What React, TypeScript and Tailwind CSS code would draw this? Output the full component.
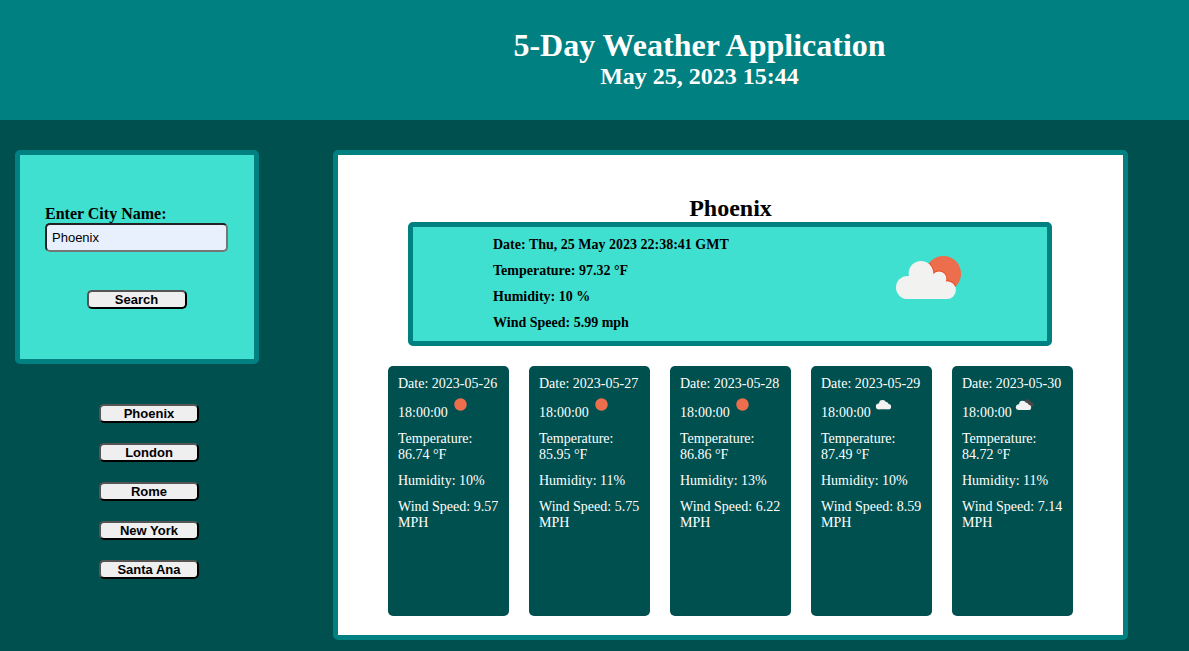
import { useId, useState } from "react";

type Sky = "clear" | "fewClouds" | "cloudy" | "overcast";

interface Forecast {
  date: string;
  sky: Sky;
  temperature: string;
  humidity: string;
  wind: string;
}

const cities = ["Phoenix", "London", "Rome", "New York", "Santa Ana"];

const forecasts: Forecast[] = [
  { date: "2023-05-26", sky: "clear", temperature: "86.74", humidity: "10", wind: "9.57" },
  { date: "2023-05-27", sky: "clear", temperature: "85.95", humidity: "11", wind: "5.75" },
  { date: "2023-05-28", sky: "clear", temperature: "86.86", humidity: "13", wind: "6.22" },
  { date: "2023-05-29", sky: "cloudy", temperature: "87.49", humidity: "10", wind: "8.59" },
  { date: "2023-05-30", sky: "overcast", temperature: "84.72", humidity: "11", wind: "7.14" },
];

const buttonStyle =
  "flex h-[19px] w-[100px] items-center justify-center rounded-[5px] border-2 border-t-[#555] border-l-[#555] border-r-black border-b-black bg-[#efefef] font-['Liberation_Sans',Arial,sans-serif] text-[13px] leading-[15px] font-bold text-black";

function Cloud() {
  return (
    <>
      <circle cx="27.5" cy="53.5" r="11.5" />
      <circle cx="41" cy="39.3" r="12.3" />
      <circle cx="59" cy="44.8" r="7.4" />
      <circle cx="67" cy="56.1" r="8.9" />
      <path d="M27.5 42h3L41 39l12 4 8 4 6 9v9H27.5z" />
    </>
  );
}

function PlainCloud() {
  return (
    <>
      <circle cx="31" cy="57.5" r="11.5" />
      <circle cx="46" cy="45" r="13.5" />
      <circle cx="60" cy="50" r="10" />
      <circle cx="70" cy="58.5" r="10.5" />
      <path d="M31 46l10-6 14-3 14 11 1 21H31z" />
    </>
  );
}

function WeatherIcon({ sky, className }: { sky: Sky; className: string }) {
  const clip = useId();
  return (
    <svg viewBox="0 0 100 100" className={className} aria-hidden="true">
      {sky === "clear" && <circle cx="50" cy="50" r="25" fill="#ec6e4c" />}
      {sky === "fewClouds" && (
        <>
          <clipPath id={clip}>
            <circle cx="63.3" cy="39.7" r="17.8" />
          </clipPath>
          <circle cx="63.3" cy="39.7" r="17.8" fill="#ec6e4c" />
          <g clipPath={`url(#${clip})`} fill="#ee4b22" stroke="#ee4b22" strokeWidth="2">
            <Cloud />
          </g>
          <g fill="#f2f2f0">
            <Cloud />
          </g>
        </>
      )}
      {sky === "cloudy" && (
        <g fill="#f2f2f2">
          <PlainCloud />
        </g>
      )}
      {sky === "overcast" && (
        <>
          <g fill="#484848" transform="translate(24 4) scale(.78)">
            <PlainCloud />
          </g>
          <g fill="#f2f2f2" transform="translate(-4 3)">
            <PlainCloud />
          </g>
        </>
      )}
    </svg>
  );
}

function ForecastCard({ day }: { day: Forecast }) {
  return (
    <article className="flex min-h-[250px] min-w-0 flex-col gap-2.5 rounded-[5px] bg-[#005050] p-2.5 pr-1.5 text-sm leading-4 text-white">
      <p>
        Date: {day.date} <br />
        18:00:00
        <WeatherIcon sky={day.sky} className="inline-block size-[25px] align-baseline" />
      </p>
      <p>
        Temperature:
        <br />
        {day.temperature} °F
      </p>
      <p>Humidity: {day.humidity}%</p>
      <p>
        Wind Speed: {day.wind}
        <br />
        MPH
      </p>
    </article>
  );
}

export default function App() {
  const [city, setCity] = useState("Phoenix");

  return (
    <div className="min-h-screen bg-[#005050] pb-[11px] font-['Liberation_Serif','Times_New_Roman',serif] text-black">
      <header className="bg-[#008080] pt-[27px] pb-[30px] pl-[210px] text-center font-bold text-white">
        <h1 className="text-[32px] leading-9">5-Day Weather Application</h1>
        <p className="text-2xl leading-[27px]">May 25, 2023 15:44</p>
      </header>

      <div className="flex items-start gap-[74px] pt-[30px] pr-[61px] pl-[15px]">
        <aside className="w-[244px] shrink-0">
          <form
            onSubmit={(event) => event.preventDefault()}
            className="flex flex-col rounded-[5px] border-[5px] border-[#008080] bg-[#40e0d0] py-[50px] pr-[26px] pl-[25px]"
          >
            <label htmlFor="city" className="text-base leading-[18px] font-bold">
              Enter City Name:
            </label>
            <input
              id="city"
              type="text"
              value={city}
              onChange={(event) => setCity(event.target.value)}
              className="h-[29px] w-full rounded-[5px] border-2 border-t-[#222] border-l-[#222] border-r-[#767676] border-b-[#767676] bg-[#e8f0fe] px-[5px] font-['Liberation_Sans',Arial,sans-serif] text-[13px] text-black"
            />
            <button type="submit" className={`mt-[38px] self-center ${buttonStyle}`}>
              Search
            </button>
          </form>

          <nav aria-label="Saved cities" className="mt-10 flex flex-col gap-5 pl-[84px]">
            {cities.map((name) => (
              <button key={name} type="button" onClick={() => setCity(name)} className={buttonStyle}>
                {name}
              </button>
            ))}
          </nav>
        </aside>

        <main className="min-w-0 flex-1 rounded-[5px] border-[5px] border-[#008080] bg-white px-[50px] pt-10 pb-[19px]">
          <h2 className="text-center text-2xl leading-[27px] font-bold">Phoenix</h2>
          <section className="mr-[21px] ml-5 flex items-center justify-between rounded-[5px] border-[5px] border-[#008080] bg-[#40e0d0] pr-[67px] pl-20">
            <div className="flex flex-col gap-2.5 py-2.5 text-sm leading-4 font-bold">
              <p>Date: Thu, 25 May 2023 22:38:41 GMT</p>
              <p>Temperature: 97.32 °F</p>
              <p>Humidity: 10 %</p>
              <p>Wind Speed: 5.99 mph</p>
            </div>
            <WeatherIcon sky="fewClouds" className="size-[100px]" />
          </section>

          <section className="mt-5 grid grid-cols-5 gap-5">
            {forecasts.map((day) => (
              <ForecastCard key={day.date} day={day} />
            ))}
          </section>
        </main>
      </div>
    </div>
  );
}
